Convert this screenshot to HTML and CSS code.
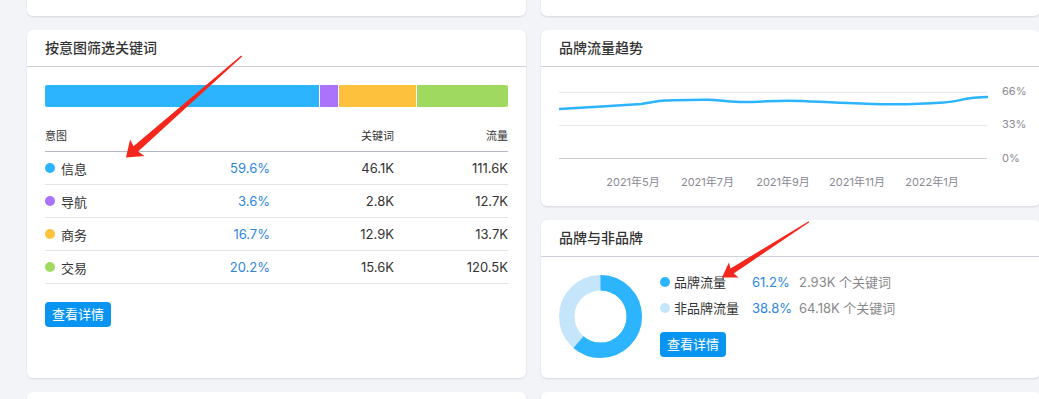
FILE: index.html
```html
<!DOCTYPE html>
<html lang="zh">
<head>
<meta charset="utf-8">
<title>关键词概览</title>
<link rel="stylesheet" href="styles.css">
</head>
<body>
<div class="page">
  <div class="card stub stub-top col-l"></div>
  <div class="card stub stub-top col-r"></div>

  <section class="card intent">
    <header class="card-head">按意图筛选关键词</header>
    <div class="intent-body">
      <div class="bar">
        <span class="seg c-info" style="flex: 59.6"></span>
        <span class="seg c-nav" style="flex: 3.9"></span>
        <span class="seg c-biz" style="flex: 16.7"></span>
        <span class="seg c-deal" style="flex: 19.8"></span>
      </div>
      <div class="table">
        <div class="tr thead">
          <span>意图</span><span></span><span class="num">关键词</span><span class="num">流量</span>
        </div>
        <div class="tr">
          <span class="name"><i class="dot c-info"></i>信息</span><span class="num pct">59.6%</span><span class="num">46.1K</span><span class="num">111.6K</span>
        </div>
        <div class="tr">
          <span class="name"><i class="dot c-nav"></i>导航</span><span class="num pct">3.6%</span><span class="num">2.8K</span><span class="num">12.7K</span>
        </div>
        <div class="tr">
          <span class="name"><i class="dot c-biz"></i>商务</span><span class="num pct">16.7%</span><span class="num">12.9K</span><span class="num">13.7K</span>
        </div>
        <div class="tr">
          <span class="name"><i class="dot c-deal"></i>交易</span><span class="num pct">20.2%</span><span class="num">15.6K</span><span class="num">120.5K</span>
        </div>
      </div>
      <button class="btn intent-btn">查看详情</button>
    </div>
  </section>

  <section class="card trend">
    <header class="card-head">品牌流量趋势</header>
    <div class="trend-body">
      <svg class="chart" width="480" height="139" viewBox="0 0 480 139">
        <line x1="0" y1="25.5" x2="428" y2="25.5" class="grid"/>
        <line x1="0" y1="58.5" x2="428" y2="58.5" class="grid"/>
        <line x1="0" y1="91.5" x2="428" y2="91.5" class="grid base"/>
        <path class="line" d="M0 42 C 20 41, 60 38.5, 82 37 C 92 36, 96 34, 106 33.6 C 125 33, 140 32.4, 150 32.8 C 165 33.4, 172 35, 185 35 C 200 35, 215 33.8, 228 33.8 C 250 34, 262 35.2, 280 35.7 C 300 36.2, 320 37.3, 338 37.3 C 355 37.3, 370 36.5, 385 35.5 C 398 34.5, 405 31.6, 415 30.8 C 420 30.4, 424 30.1, 428 30"/>
        <text x="443" y="28" class="ax">66%</text>
        <text x="443" y="61" class="ax">33%</text>
        <text x="443" y="95" class="ax">0%</text>
        <text x="74" y="118.5" class="ax mid">2021年5月</text>
        <text x="148.5" y="118.5" class="ax mid">2021年7月</text>
        <text x="224" y="118.5" class="ax mid">2021年9月</text>
        <text x="298" y="118.5" class="ax mid">2021年11月</text>
        <text x="373" y="118.5" class="ax mid">2022年1月</text>
      </svg>
    </div>
  </section>

  <section class="card brand">
    <header class="card-head">品牌与非品牌</header>
    <div class="brand-body">
      <svg class="donut" width="83" height="83" viewBox="0 0 83 83">
        <circle cx="41.5" cy="41.5" r="33.75" class="ring-light"/>
        <circle cx="41.5" cy="41.5" r="33.75" class="ring-main" stroke-dasharray="129.8 212.1" transform="rotate(-90 41.5 41.5)"/>
      </svg>
      <div class="brand-info">
        <div class="legend">
          <i class="dot c-info"></i><span class="lbl">品牌流量</span><span class="pct">61.2%</span><span class="cnt">2.93K 个关键词</span>
          <i class="dot c-light"></i><span class="lbl">非品牌流量</span><span class="pct">38.8%</span><span class="cnt">64.18K 个关键词</span>
        </div>
        <button class="btn brand-btn">查看详情</button>
      </div>
    </div>
  </section>

  <div class="card stub stub-bottom col-l"></div>
  <div class="card stub stub-bottom col-r"></div>
</div>

<svg class="arrows" width="1039" height="399" viewBox="0 0 1039 399">
  <polygon points="126,157.5 144.5,155.9 138.1,151.6 242.2,56.5 241.2,55.5 133.5,146.3 130.1,139.4"/>
  <polygon points="722,277.5 738.6,277.5 733.7,273.5 809.3,222.2 808.7,221.2 730.5,268.5 728.9,262.4"/>
</svg>
</body>
</html>
```

FILE: styles.css
```css
html, body {
  margin: 0;
  padding: 0;
}
body {
  position: relative;
  width: 1039px;
  height: 399px;
  overflow: hidden;
  background: #f3f4f8;
  font-family: Inter, "Noto Sans CJK SC", sans-serif;
  color: #333;
}

.page {
  display: grid;
  grid-template-columns: 499px 499px;
  grid-template-rows: 16px 176px 158px 7px;
  column-gap: 15px;
  row-gap: 14px;
  padding-left: 27px;
}

.card {
  background: #fff;
  border-radius: 6px;
  box-shadow: 0 1px 2px rgba(40, 45, 70, 0.14);
}
.stub-top {
  border-radius: 0 0 6px 6px;
  grid-row: 1;
}
.stub-bottom {
  border-radius: 6px 6px 0 0;
  grid-row: 4;
}
.col-l { grid-column: 1; }
.col-r { grid-column: 2; }

.intent { grid-column: 1; grid-row: 2 / 4; }
.trend { grid-column: 2; grid-row: 2; }
.brand { grid-column: 2; grid-row: 3; }

.card-head {
  height: 36px;
  line-height: 36px;
  padding: 0 18px;
  font-size: 14px;
  font-weight: 500;
  color: #333;
  border-bottom: 1px solid #cfd0da;
}

/* intent card */
.intent-body {
  padding: 18px;
}
.bar {
  display: flex;
  gap: 1px;
  height: 22px;
  border-radius: 2px;
  overflow: hidden;
}
.seg { display: block; }

.c-info { background: #2db4ff; }
.c-nav { background: #ab72fb; }
.c-biz { background: #fdc13e; }
.c-deal { background: #9fd95f; }
.c-light { background: #c5e5fb; }

.table {
  margin-top: 12px;
}
.tr {
  display: grid;
  grid-template-columns: 145px 80px 124px 114px;
  align-items: center;
  height: 32px;
  border-bottom: 1px solid #e3e4ea;
  font-size: 13px;
  color: #333;
}
.thead {
  font-size: 11px;
  border-bottom-color: #b6b7c4;
}
.num { text-align: right; }
.pct { color: #2d87de; }
.name {
  display: flex;
  align-items: center;
  gap: 6px;
}
.dot {
  display: inline-block;
  width: 10px;
  height: 10px;
  border-radius: 50%;
}

.btn {
  display: inline-block;
  height: 25px;
  line-height: 25px;
  padding: 0 7px;
  border: 0;
  border-radius: 4px;
  background: #0a94f2;
  color: #fff;
  font-family: Inter, "Noto Sans CJK SC", sans-serif;
  font-size: 13px;
}
.intent-btn {
  margin-top: 18px;
}

/* trend card */
.trend-body {
  padding-left: 18px;
}
.chart { display: block; }
.grid { stroke: #e6e7ed; stroke-width: 1; }
.grid.base { stroke: #c9cad4; }
.line {
  fill: none;
  stroke: #2db4ff;
  stroke-width: 2.5;
  stroke-linecap: round;
}
.ax {
  font-family: Inter, "Noto Sans CJK SC", sans-serif;
  font-size: 11px;
  fill: #8a8a93;
}
.ax.mid { text-anchor: middle; }

/* brand card */
.brand-body {
  display: flex;
  align-items: flex-start;
  gap: 18px;
  padding: 18px;
}
.donut { display: block; flex: none; }
.ring-light { fill: none; stroke: #c5e5fb; stroke-width: 15.5; }
.ring-main { fill: none; stroke: #2db4ff; stroke-width: 15.5; }

.brand-info {
  display: flex;
  flex-direction: column;
  align-items: flex-start;
}
.legend {
  display: grid;
  grid-template-columns: 14px 78px 47px auto;
  row-gap: 12px;
  align-items: center;
  font-size: 13px;
  line-height: 14px;
}
.legend .lbl { color: #333; }
.legend .cnt { color: #888; }
.brand-btn {
  margin-top: 17px;
}

.arrows {
  position: absolute;
  left: 0;
  top: 0;
  pointer-events: none;
}
.arrows polygon {
  fill: #f5261c;
}
```
